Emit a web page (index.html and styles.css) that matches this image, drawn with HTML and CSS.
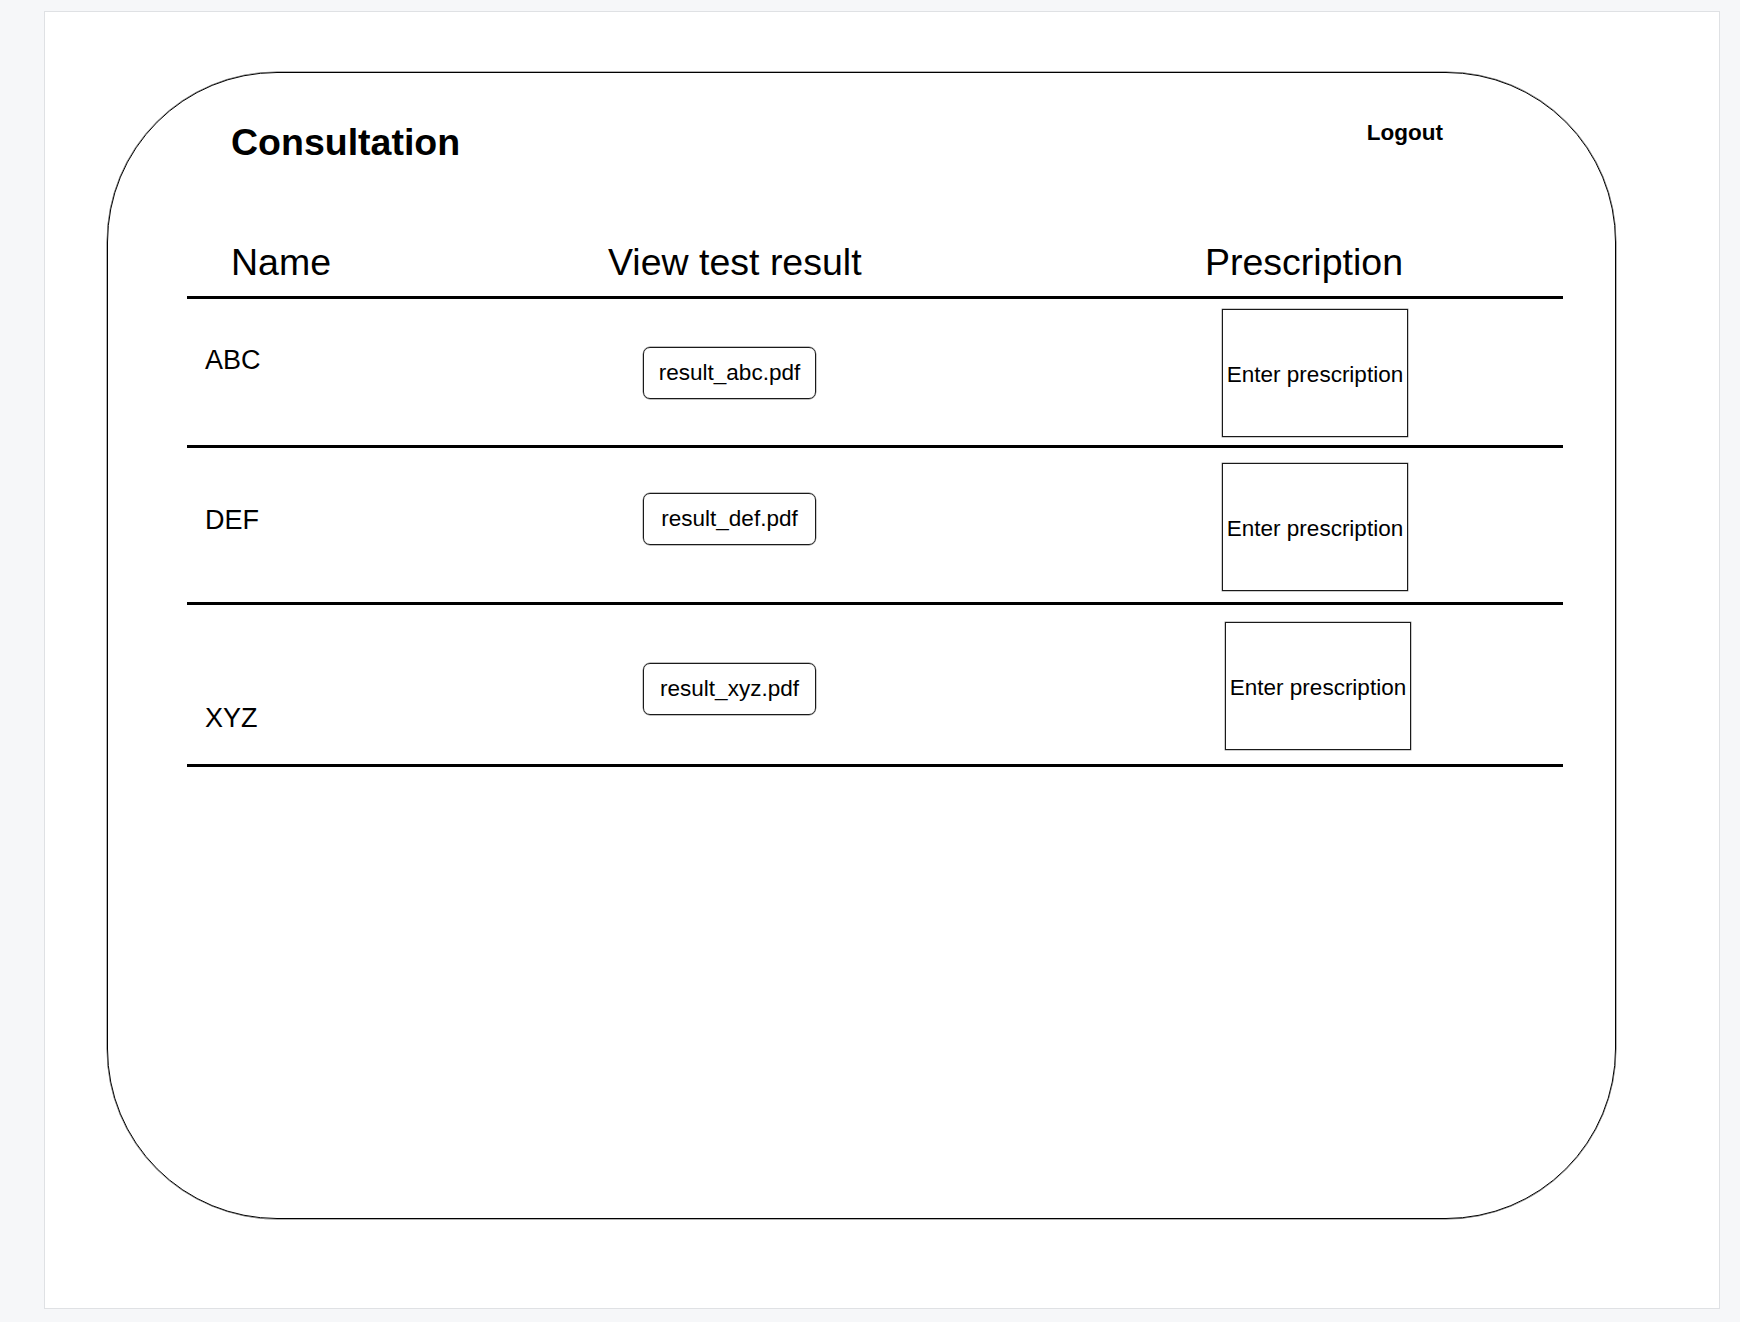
FILE: index.html
```html
<!DOCTYPE html>
<html lang="en">
<head>
<meta charset="utf-8">
<title>Consultation</title>
<link rel="stylesheet" href="styles.css">
</head>
<body>
<div class="canvas">
  <div class="panel">
    <div class="topbar">
      <h1 class="title">Consultation</h1>
      <a class="logout">Logout</a>
    </div>
    <div class="table">
      <div class="thead">
        <div class="th th-name">Name</div>
        <div class="th th-result">View test result</div>
        <div class="th th-presc">Prescription</div>
      </div>
      <div class="row row-1">
        <div class="name">ABC</div>
        <div class="result"><span class="file">result_abc.pdf</span></div>
        <div class="presc"><div class="box">Enter prescription</div></div>
      </div>
      <div class="row row-2">
        <div class="name">DEF</div>
        <div class="result"><span class="file">result_def.pdf</span></div>
        <div class="presc"><div class="box">Enter prescription</div></div>
      </div>
      <div class="row row-3">
        <div class="name">XYZ</div>
        <div class="result"><span class="file">result_xyz.pdf</span></div>
        <div class="presc"><div class="box">Enter prescription</div></div>
      </div>
    </div>
  </div>
</div>
</body>
</html>
```

FILE: styles.css
```css
html, body {
  margin: 0;
  padding: 0;
}
body {
  background: #f6f7f9;
  font-family: "Liberation Sans", Arial, Helvetica, sans-serif;
  color: #000;
  width: 1740px;
  height: 1322px;
  overflow: hidden;
}
.canvas {
  box-sizing: border-box;
  margin: 11px 0 0 44px;
  width: 1676px;
  height: 1298px;
  background: #fff;
  border: 1px solid #dfe1e4;
  overflow: hidden;
}
.panel {
  box-sizing: border-box;
  margin: 60px 0 0 62px;
  width: 1509px;
  height: 1147px;
  border: 1px solid #000;
  border-radius: 170px;
  box-shadow: 0 0 0 0.5px rgba(0, 0, 0, 0.6);
}
.topbar {
  display: flex;
  align-items: flex-start;
  padding-left: 123px;
}
.title {
  margin: 51px 0 0 0;
  font-size: 37.5px;
  line-height: 1;
  font-weight: bold;
}
.logout {
  margin: 49px 172px 0 auto;
  font-size: 22.5px;
  line-height: 1;
  font-weight: bold;
  color: #000;
  text-decoration: none;
}
.table {
  margin: 82px 0 0 79px;
  width: 1376px;
}
.thead,
.row {
  display: grid;
  grid-template-columns: 420px 598px 1fr;
  align-items: start;
  border-bottom: 3px solid #000;
}
.thead {
  padding-bottom: 15px;
}
.th {
  font-size: 37.5px;
  line-height: 1;
}
.th-name {
  padding-left: 44px;
}
.th-result {
  padding-left: 1px;
}
.name {
  padding-left: 18px;
  font-size: 27px;
  line-height: 1;
}
.result {
  padding-left: 36px;
}
.file {
  box-sizing: border-box;
  display: flex;
  align-items: center;
  justify-content: center;
  width: 173px;
  height: 52px;
  border: 1px solid #1a1a1a;
  border-radius: 7px;
  box-shadow: 0 0 0 0.4px rgba(0, 0, 0, 0.5);
  font-size: 22.5px;
  line-height: 1;
}
.presc {
  padding-left: 17px;
}
.box {
  box-sizing: border-box;
  display: flex;
  align-items: center;
  justify-content: center;
  width: 186px;
  height: 128px;
  padding-top: 4px;
  border: 1px solid #1a1a1a;
  box-shadow: 0 0 0 0.4px rgba(0, 0, 0, 0.5);
  font-size: 22.5px;
  line-height: 1;
  white-space: nowrap;
}
.row-1 { height: 146px; }
.row-1 .name { margin-top: 48px; }
.row-1 .file { margin-top: 48px; }
.row-1 .box { margin-top: 10px; }

.row-2 { height: 154px; }
.row-2 .name { margin-top: 59px; }
.row-2 .file { margin-top: 45px; }
.row-2 .box { margin-top: 15px; }

.row-3 { height: 159px; }
.row-3 .name { margin-top: 100px; }
.row-3 .file { margin-top: 58px; }
.row-3 .presc { padding-left: 20px; }
.row-3 .box { margin-top: 17px; }
```
